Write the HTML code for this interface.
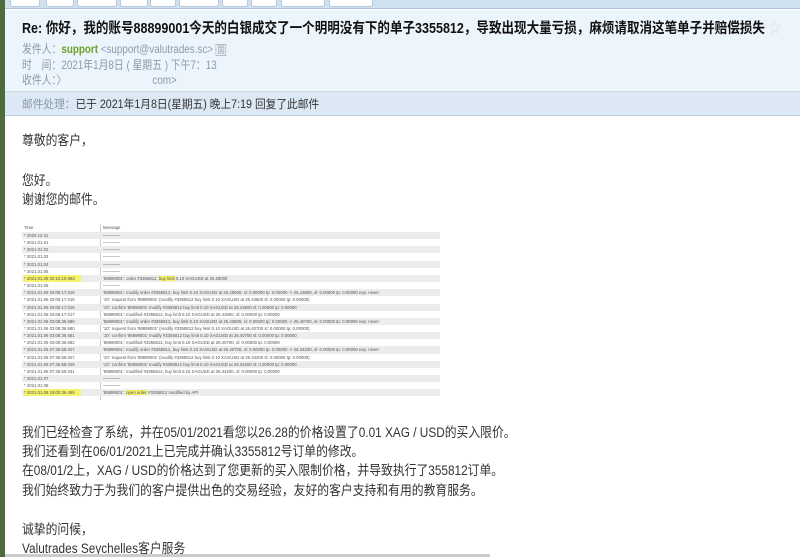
<!DOCTYPE html>
<html><head><meta charset="utf-8"><style>
*{margin:0;padding:0;box-sizing:border-box}
body{width:800px;height:557px;overflow:hidden;background:#fff;position:relative;font-family:"Liberation Sans","Noto Sans CJK SC",sans-serif;color:#222}
.a{position:absolute;white-space:nowrap}
.tb{left:0;top:0;width:800px;height:9px;background:#cfe0ef;border-bottom:1px solid #a9c3dc}
.btn{position:absolute;top:0;height:7px;background:#fff;border:1px solid #b5c9dc;border-top:none;border-radius:0 0 3px 3px}
.hd{left:0;top:10px;width:800px;height:81px;background:#edf5fc}
.st{left:0;top:91px;width:800px;height:25px;background:#dce9f4;border-top:1px solid #c9dceb;border-bottom:1px solid #b8cfe3}
.lbl{color:#8a9aaa;font-size:12px;transform:scaleX(0.82);transform-origin:left}
.body{font-size:13.5px;color:#333;left:22px;transform:scaleX(0.875);transform-origin:left}
.tbl{position:absolute;left:22px;top:224px;width:418px;font-size:4.3px;color:#555}
.r{position:absolute;left:0;width:418px;height:7.15px;line-height:7.15px}
.r span{position:absolute}
.t{left:2px}.m{left:81px}
.g{background:#ececec}
.hl{background:#f5f36a}
</style></head><body>
<div class="a" style="left:0;top:0;width:5px;height:557px;background:#4f6b3a;z-index:5"></div>
<div class="a tb"></div>
<div class="btn" style="left:10px;width:30px"></div>
<div class="btn" style="left:46px;width:28px"></div>
<div class="btn" style="left:77px;width:40px"></div>
<div class="btn" style="left:120px;width:28px"></div>
<div class="btn" style="left:150px;width:26px"></div>
<div class="btn" style="left:179px;width:40px"></div>
<div class="btn" style="left:222px;width:26px"></div>
<div class="btn" style="left:251px;width:26px"></div>
<div class="btn" style="left:281px;width:44px"></div>
<div class="btn" style="left:329px;width:44px"></div>
<div class="a hd"></div>
<div class="a" style="left:22px;top:17px;font-size:14.5px;font-weight:bold;color:#111;transform:scaleX(0.865);transform-origin:left">Re: 你好，我的账号88899001今天的白银成交了一个明明没有下的单子3355812，导致出现大量亏损，麻烦请取消这笔单子并赔偿损失 <span style="color:#ddd;font-weight:normal">☆</span></div>
<div class="a lbl" style="left:22px;top:40px">发件人：<b style="color:#6aa12a">support</b> &lt;support@valutrades.sc&gt; <span style="border:1px solid #bbb;font-size:9px;padding:0 1px">囯</span></div>
<div class="a lbl" style="left:22px;top:56px">时　间：2021年1月8日 ( 星期五 ) 下午7：13</div>
<div class="a lbl" style="left:22px;top:71px">收件人：〉<span style="margin-left:105px">com&gt;</span></div>
<div class="a st"></div>
<div class="a" style="left:22px;top:96px;font-size:11.5px;color:#333;transform:scaleX(0.93);transform-origin:left"><span style="color:#8a9aaa">邮件处理：</span>已于 2021年1月8日(星期五) 晚上7:19 回复了此邮件</div>
<div class="a body" style="top:129px">尊敬的客户，</div>
<div class="a body" style="top:169px">您好。</div>
<div class="a body" style="top:188px">谢谢您的邮件。</div>
<div class="tbl">
<div class="r" style="top:0"><span class="t">Time</span><span class="m">Message</span></div>
<div style="position:absolute;left:78px;top:0;width:1px;height:176px;background:#ccc"></div>
<div class="r g" style="top:8px"><span class="t">* 2020.12.31</span><span class="m">————</span></div>
<div class="r" style="top:15.15px"><span class="t">* 2021.01.01</span><span class="m">————</span></div>
<div class="r g" style="top:22.3px"><span class="t">* 2021.01.02</span><span class="m">————</span></div>
<div class="r" style="top:29.45px"><span class="t">* 2021.01.03</span><span class="m">————</span></div>
<div class="r g" style="top:36.6px"><span class="t">* 2021.01.04</span><span class="m">————</span></div>
<div class="r" style="top:43.75px"><span class="t">* 2021.01.05</span><span class="m">————</span></div>
<div class="r g" style="top:50.9px"><span class="t hl" style="padding-right:6px">* 2021.01.05 02:15:10.893</span><span class="m">'88899001': order #3355812, <b class="hl" style="font-weight:normal">buy limit</b> 0.10 XAGUSD at 26.28000</span></div>
<div class="r" style="top:58.05px"><span class="t">* 2021.01.06</span><span class="m">————</span></div>
<div class="r g" style="top:65.2px"><span class="t">* 2021.01.06 03:08:17.016</span><span class="m">'88899001': modify order #3355812, buy limit 0.10 XAGUSD at 26.28000, sl: 0.00000 tp: 0.00000 -&gt; 26.43600, sl: 0.00000 tp: 0.00000 exp: never</span></div>
<div class="r" style="top:72.35px"><span class="t">* 2021.01.06 03:08:17.016</span><span class="m">'10': request from '88899001' (modify #3355812 buy limit 0.10 XAGUSD at 26.43600 sl: 0.00000 tp: 0.00000)</span></div>
<div class="r g" style="top:79.5px"><span class="t">* 2021.01.06 03:08:17.016</span><span class="m">'10': confirm '88899001' modify #3355812 buy limit 0.10 XAGUSD at 26.43600 sl: 0.00000 tp: 0.00000</span></div>
<div class="r" style="top:86.65px"><span class="t">* 2021.01.06 03:08:17.017</span><span class="m">'88899001': modified #3355812, buy limit 0.10 XAGUSD at 26.43600, sl: 0.00000 tp: 0.00000</span></div>
<div class="r g" style="top:93.8px"><span class="t">* 2021.01.06 03:08:36.680</span><span class="m">'88899001': modify order #3355812, buy limit 0.10 XAGUSD at 26.43600, sl: 0.00000 tp: 0.00000 -&gt; 26.40700, sl: 0.00000 tp: 0.00000 exp: never</span></div>
<div class="r" style="top:100.95px"><span class="t">* 2021.01.06 03:08:36.680</span><span class="m">'10': request from '88899001' (modify #3355812 buy limit 0.10 XAGUSD at 26.40700 sl: 0.00000 tp: 0.00000)</span></div>
<div class="r g" style="top:108.1px"><span class="t">* 2021.01.06 03:08:36.681</span><span class="m">'10': confirm '88899001' modify #3355812 buy limit 0.10 XAGUSD at 26.40700 sl: 0.00000 tp: 0.00000</span></div>
<div class="r" style="top:115.25px"><span class="t">* 2021.01.06 03:08:36.682</span><span class="m">'88899001': modified #3355812, buy limit 0.10 XAGUSD at 26.40700, sl: 0.00000 tp: 0.00000</span></div>
<div class="r g" style="top:122.4px"><span class="t">* 2021.01.06 07:36:59.027</span><span class="m">'88899001': modify order #3355812, buy limit 0.10 XAGUSD at 26.40700, sl: 0.00000 tp: 0.00000 -&gt; 26.34200, sl: 0.00000 tp: 0.00000 exp: never</span></div>
<div class="r" style="top:129.55px"><span class="t">* 2021.01.06 07:36:59.027</span><span class="m">'10': request from '88899001' (modify #3355812 buy limit 0.10 XAGUSD at 26.34200 sl: 0.00000 tp: 0.00000)</span></div>
<div class="r g" style="top:136.7px"><span class="t">* 2021.01.06 07:36:59.029</span><span class="m">'10': confirm '88899001' modify #3355812 buy limit 0.10 XAGUSD at 26.34200 sl: 0.00000 tp: 0.00000</span></div>
<div class="r" style="top:143.85px"><span class="t">* 2021.01.06 07:36:59.031</span><span class="m">'88899001': modified #3355812, buy limit 0.10 XAGUSD at 26.34200, sl: 0.00000 tp: 0.00000</span></div>
<div class="r g" style="top:151px"><span class="t">* 2021.01.07</span><span class="m">————</span></div>
<div class="r" style="top:158.15px"><span class="t">* 2021.01.08</span><span class="m">————</span></div>
<div class="r g" style="top:165.3px"><span class="t hl" style="padding-right:6px">* 2021.01.08 19:00:36.495</span><span class="m">'88899001': <b class="hl" style="font-weight:normal">open order</b> #3355812 modified by API</span></div>
</div>
<div class="a body" style="top:421px">我们已经检查了系统，并在05/01/2021看您以26.28的价格设置了0.01 XAG / USD的买入限价。</div>
<div class="a body" style="top:440px">我们还看到在06/01/2021上已完成并确认3355812号订单的修改。</div>
<div class="a body" style="top:459px">在08/01/2上，XAG / USD的价格达到了您更新的买入限制价格，并导致执行了355812订单。</div>
<div class="a body" style="top:479px">我们始终致力于为我们的客户提供出色的交易经验，友好的客户支持和有用的教育服务。</div>
<div class="a body" style="top:518px">诚挚的问候，</div>
<div class="a body" style="top:537px">Valutrades Seychelles客户服务</div>
<div class="a" style="left:0;top:554px;width:490px;height:3px;background:#ccc"></div>
</body></html>
